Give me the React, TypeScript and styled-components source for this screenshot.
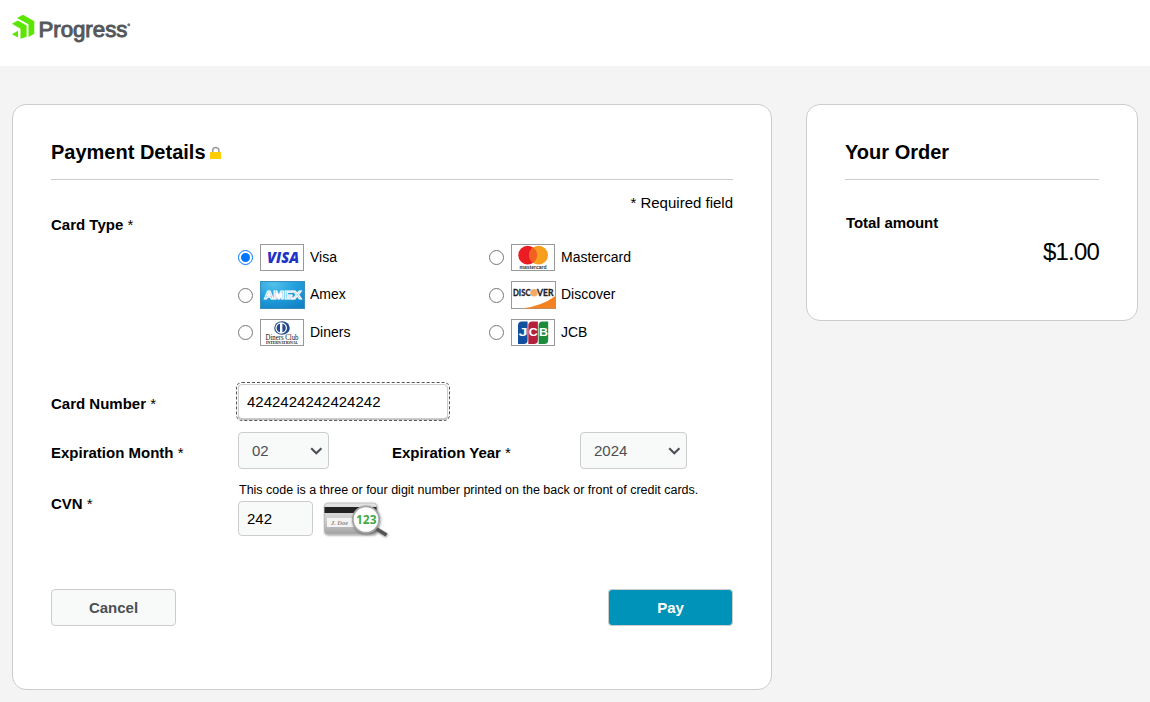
import React from "react";
import styled, { createGlobalStyle } from "styled-components";

const GlobalStyle = createGlobalStyle`
  * { box-sizing: border-box; }
  body {
    margin: 0;
    background: #f4f4f4;
    color: #000;
    font-family: "Liberation Sans", Arial, sans-serif;
    font-size: 15px;
    line-height: 17px;
  }
`;

const Page = styled.div`
  min-height: 702px;
  overflow: hidden;
`;

const TopBar = styled.header`
  height: 66px;
  padding: 13px 0 0 10px;
  background: #fff;
`;

const Columns = styled.main`
  display: flex;
  align-items: flex-start;
  gap: 34px;
  padding: 38px 12px 12px;
`;

const Panel = styled.section<{ $width: number; $height: number }>`
  width: ${(p) => p.$width}px;
  height: ${(p) => p.$height}px;
  padding: 0 38px;
  background: #fff;
  border: 1px solid #ccc;
  border-radius: 14px;
`;

const PanelHead = styled.div`
  display: flex;
  height: 75px;
  padding-top: 36px;
  gap: 4px;
  border-bottom: 1px solid #ccc;
  svg { margin-top: 5px; }
`;

const PanelTitle = styled.h2`
  margin: 0;
  font-size: 20px;
  line-height: 23px;
  font-weight: bold;
`;

const RequiredNote = styled.div`
  margin-top: 14px;
  text-align: right;
`;

const FieldLabel = styled.label<{ $width?: number; $top?: number }>`
  flex: none;
  width: ${(p) => (p.$width ? p.$width + "px" : "auto")};
  padding-top: ${(p) => p.$top ?? 0}px;
  font-weight: bold;
  span { font-weight: normal; }
`;

const CardTypeRow = styled.div`
  margin-top: 5px;
`;

const CardGrid = styled.div`
  display: grid;
  grid-template-columns: 251px 1fr;
  grid-template-rows: 27px 28px 27px;
  row-gap: 10px;
  margin: 11px 0 0 187px;
`;

const CardOption = styled.label`
  display: flex;
  align-items: center;
  font-size: 14px;
  line-height: 16px;
  svg { display: block; margin: 0 5px 0 7px; flex: none; }
`;

const CardName = styled.span`
  padding-bottom: 2px;
`;

const Radio = styled.input`
  width: 15px;
  height: 15px;
  margin: 0;
`;

const FieldRow = styled.div<{ $gap: number }>`
  display: flex;
  align-items: flex-start;
  margin-top: ${(p) => p.$gap}px;
`;

const TextInput = styled.input<{ $width: number; $focused?: boolean }>`
  display: block;
  width: ${(p) => p.$width}px;
  height: 35px;
  padding: 0 8px;
  border: 1px solid #ccc;
  border-radius: 4px;
  background: ${(p) => (p.$focused ? "#fff" : "#f8faf9")};
  color: #000;
  font: 15px "Liberation Sans", Arial, sans-serif;
  outline: ${(p) => (p.$focused ? "1px dashed #555" : "none")};
  outline-offset: 1px;
  box-shadow: ${(p) => (p.$focused ? "0 1px 1px #bbb" : "none")};
`;

const SelectBox = styled.div<{ $width: number }>`
  display: grid;
  grid-template-columns: 1fr 18px;
  align-items: center;
  width: ${(p) => p.$width}px;
  height: 37px;
  border: 1px solid #ccc;
  border-radius: 4px;
  background: #f8faf9;
  select { grid-area: 1 / 1 / 2 / 3; }
  svg { grid-area: 1 / 2; pointer-events: none; }
`;

const Select = styled.select`
  appearance: none;
  width: 100%;
  height: 100%;
  padding: 0 0 0 13px;
  border: 0;
  background: transparent;
  color: #4b4f54;
  font: 15px "Liberation Sans", Arial, sans-serif;
`;

const YearGroup = styled.div`
  display: flex;
  margin-left: 63px;
`;

const CodeRow = styled.div`
  display: flex;
  gap: 10px;
  margin-top: 3px;
`;

const CodeHint = styled.div`
  padding: 1px 0 0 1px;
  font-size: 12.5px;
  line-height: 15px;
  white-space: nowrap;
`;

const Actions = styled.div`
  display: flex;
  justify-content: space-between;
  margin-top: 50px;
`;

const Button = styled.button<{ $primary?: boolean }>`
  width: 125px;
  height: 37px;
  padding: 0;
  border: 1px solid #ccc;
  border-radius: 4px;
  background: ${(p) => (p.$primary ? "#0093b9" : "#f8faf9")};
  color: ${(p) => (p.$primary ? "#fff" : "#4b4f54")};
  font: bold 15px "Liberation Sans", Arial, sans-serif;
`;

const TotalLabel = styled.div`
  margin: 34px 0 0 1px;
  font-weight: bold;
  letter-spacing: -0.08px;
`;

const TotalValue = styled.div`
  margin-top: 7px;
  font-size: 24px;
  line-height: 27px;
  letter-spacing: -0.8px;
  text-align: right;
`;

const ProgressLogo = () => (
  <svg width="124" height="34" viewBox="10 13 124 34" aria-label="Progress">
    <g fill="#5ce500">
      <path d="M17 17.9 23 14.8 34.3 21.3V33.8L28.5 37V24.3Z" />
      <path d="M12 23.8 17.8 20.4 26.6 25.4V36.8L20.5 38.8V28.8Z" />
      <path d="M12 34.3 18 30.7V37.6Z" />
    </g>
    <text x="38.4" y="37.3" fontFamily="Liberation Sans" fontSize="22" fill="#54585c" stroke="#54585c" strokeWidth="1" textLength="89" lengthAdjust="spacingAndGlyphs">Progress</text>
    <circle cx="128.8" cy="24.8" r="1.5" fill="#777" />
  </svg>
);

const LockIcon = () => (
  <svg width="12" height="15" viewBox="0 0 12 15">
    <path d="M2.7 7V4.5a3.1 3.1 0 0 1 6.2 0V7" fill="none" stroke="#999" strokeWidth="1.5" />
    <rect x="0" y="6" width="11" height="7" rx=".6" fill="#fc0" />
  </svg>
);

const Chevron = () => (
  <svg width="13" height="8" viewBox="0 0 13 8">
    <path d="M1.2 1.2 6.3 6.2 11.4 1.2" fill="none" stroke="#4b4f54" strokeWidth="2.1" />
  </svg>
);

const Frame = () => <rect x=".5" y=".5" width="43" height="26" fill="#fff" stroke="#999" />;

const VisaMark = () => (
  <svg width="45" height="27">
    <Frame />
    <text x="7" y="19" fontFamily="Open Sans" fontStyle="italic" fontWeight="800" fontSize="15" fill="#2033c8" textLength="32" lengthAdjust="spacingAndGlyphs">VISA</text>
  </svg>
);

const MastercardMark = () => (
  <svg width="45" height="27">
    <Frame />
    <circle cx="16.7" cy="11.2" r="9.4" fill="#eb1c24" />
    <circle cx="27.6" cy="11.2" r="9.4" fill="#f79e1f" />
    <path d="M22.15 3.5a9.4 9.4 0 0 1 0 15.4a9.4 9.4 0 0 1 0-15.4Z" fill="#f26122" />
    <text x="8.5" y="25" fontFamily="Liberation Sans" fontWeight="bold" fontSize="5.4" fill="#333" textLength="27" lengthAdjust="spacingAndGlyphs">mastercard</text>
  </svg>
);

const AmexMark = () => (
  <svg width="45" height="28">
    <defs>
      <radialGradient id="amexBlue" cx=".3" cy=".1" r="1">
        <stop offset="0" stopColor="#52c0ea" />
        <stop offset=".5" stopColor="#22a0dc" />
        <stop offset="1" stopColor="#1283c8" />
      </radialGradient>
    </defs>
    <rect x=".5" y=".5" width="44" height="27" fill="url(#amexBlue)" stroke="#3a8fbd" />
    <text x="4" y="18.4" fontFamily="Liberation Sans" fontWeight="bold" fontSize="11.5" fill="#1b94d2" stroke="#fff" strokeWidth="1.1" textLength="37.5" lengthAdjust="spacingAndGlyphs">AMEX</text>
  </svg>
);

const DiscoverMark = () => (
  <svg width="45" height="28">
    <rect x=".5" y=".5" width="44" height="27" fill="#fff" stroke="#999" />
    <path d="M11 27.5Q31 25 44.5 15V27.5Z" fill="#f58220" />
    <text x="2" y="15" fontFamily="Lato" fontWeight="bold" fontSize="9" fill="#222" stroke="#222" strokeWidth=".3" textLength="17.5" lengthAdjust="spacingAndGlyphs">DISC</text>
    <circle cx="23" cy="11.8" r="3.7" fill="#f3a968" />
    <text x="26" y="15" fontFamily="Lato" fontWeight="bold" fontSize="9" fill="#222" stroke="#222" strokeWidth=".3" textLength="16.5" lengthAdjust="spacingAndGlyphs">VER</text>
  </svg>
);

const DinersMark = () => (
  <svg width="45" height="27">
    <Frame />
    <ellipse cx="22" cy="9" rx="7.8" ry="6.8" fill="#23498f" />
    <circle cx="21.2" cy="9" r="5.8" fill="#fff" />
    <path d="M20 4.8a4.3 4.3 0 0 0 0 8.4ZM22.4 4.8a4.3 4.3 0 0 1 0 8.4Z" fill="#23498f" />
    <text x="5.5" y="21.3" fontFamily="Liberation Serif" fontSize="7.8" fill="#111" textLength="33" lengthAdjust="spacingAndGlyphs">Diners Club</text>
    <text x="6" y="25.2" fontFamily="Liberation Serif" fontWeight="bold" fontSize="3.8" fill="#111" textLength="32" lengthAdjust="spacingAndGlyphs">INTERNATIONAL</text>
  </svg>
);

const jcbBands = [
  { x: 7, color: "#12509f", letter: "J" },
  { x: 17.3, color: "#b41f3c", letter: "C" },
  { x: 27.6, color: "#1c8b3c", letter: "B" },
];

const JcbMark = () => (
  <svg width="45" height="27">
    <Frame />
    {jcbBands.map((b) => (
      <g key={b.letter}>
        <path d={`M${b.x} 25V6.5q0-4 4-4h5.6v18.5q0 4-4 4Z`} fill={b.color} />
        <text x={b.x + 0.4} y="17.3" fontFamily="Liberation Sans" fontWeight="bold" fontSize="10.5" fill="#fff" textLength="9" lengthAdjust="spacingAndGlyphs">{b.letter}</text>
      </g>
    ))}
  </svg>
);

const CodeHelpPicture = () => (
  <svg width="68" height="38" viewBox="0 0 68 38">
    <defs>
      <linearGradient id="cardBack" x1="0" y1="0" x2="0" y2="1">
        <stop offset="0" stopColor="#e4e4e4" />
        <stop offset=".6" stopColor="#ccc" />
        <stop offset="1" stopColor="#a2a2a2" />
      </linearGradient>
      <filter id="softShadow" x="-20%" y="-20%" width="140%" height="150%">
        <feDropShadow dx="0.5" dy="1" stdDeviation="1" floodOpacity=".45" />
      </filter>
    </defs>
    <rect x="1.5" y="2" width="52" height="31" rx="3" fill="url(#cardBack)" stroke="#b0b0b0" strokeWidth=".7" filter="url(#softShadow)" />
    <rect x="1.5" y="6" width="52" height="6" fill="#222" />
    <rect x="4" y="17" width="32" height="9" fill="#f4f4f4" />
    <text x="8" y="24" fontFamily="Liberation Serif" fontStyle="italic" fontWeight="bold" fontSize="7" fill="#888" textLength="17" lengthAdjust="spacingAndGlyphs">J. Doe</text>
    <g filter="url(#softShadow)">
      <path d="M52 27 63.5 34" stroke="#555" strokeWidth="3.8" />
      <circle cx="43" cy="18.5" r="13.2" fill="#fff" stroke="#a4a4a4" strokeWidth="1.8" />
    </g>
    <text x="33" y="22.8" fontFamily="Open Sans" fontWeight="bold" fontSize="12" fill="#45a845" textLength="20.5" lengthAdjust="spacingAndGlyphs">123</text>
  </svg>
);

const cardTypes = [
  { name: "Visa", Mark: VisaMark },
  { name: "Mastercard", Mark: MastercardMark },
  { name: "Amex", Mark: AmexMark },
  { name: "Discover", Mark: DiscoverMark },
  { name: "Diners", Mark: DinersMark },
  { name: "JCB", Mark: JcbMark },
];

export default function App() {
  return (
    <Page>
      <GlobalStyle />
      <TopBar>
        <ProgressLogo />
      </TopBar>
      <Columns>
        <Panel $width={760} $height={586}>
          <PanelHead>
            <PanelTitle>Payment Details</PanelTitle>
            <LockIcon />
          </PanelHead>
          <RequiredNote>* Required field</RequiredNote>
          <CardTypeRow>
            <FieldLabel as="div">Card Type <span>*</span></FieldLabel>
            <CardGrid>
              {cardTypes.map(({ name, Mark }) => (
                <CardOption key={name}>
                  <Radio type="radio" name="card" defaultChecked={name === "Visa"} />
                  <Mark />
                  <CardName>{name}</CardName>
                </CardOption>
              ))}
            </CardGrid>
          </CardTypeRow>
          <FieldRow $gap={38}>
            <FieldLabel $width={187} $top={11}>Card Number <span>*</span></FieldLabel>
            <TextInput $width={210} $focused defaultValue="4242424242424242" />
          </FieldRow>
          <FieldRow $gap={13}>
            <FieldLabel $width={187} $top={12}>Expiration Month <span>*</span></FieldLabel>
            <SelectBox $width={91}>
              <Select defaultValue="02"><option>02</option></Select>
              <Chevron />
            </SelectBox>
            <YearGroup>
              <FieldLabel $width={188} $top={12}>Expiration Year <span>*</span></FieldLabel>
              <SelectBox $width={107}>
                <Select defaultValue="2024"><option>2024</option></Select>
                <Chevron />
              </SelectBox>
            </YearGroup>
          </FieldRow>
          <FieldRow $gap={13}>
            <FieldLabel $width={187} $top={13}>CVN <span>*</span></FieldLabel>
            <div>
              <CodeHint>This code is a three or four digit number printed on the back or front of credit cards.</CodeHint>
              <CodeRow>
                <TextInput $width={75} defaultValue="242" />
                <CodeHelpPicture />
              </CodeRow>
            </div>
          </FieldRow>
          <Actions>
            <Button>Cancel</Button>
            <Button $primary>Pay</Button>
          </Actions>
        </Panel>
        <Panel $width={332} $height={217}>
          <PanelHead>
            <PanelTitle>Your Order</PanelTitle>
          </PanelHead>
          <TotalLabel>Total amount</TotalLabel>
          <TotalValue>$1.00</TotalValue>
        </Panel>
      </Columns>
    </Page>
  );
}
